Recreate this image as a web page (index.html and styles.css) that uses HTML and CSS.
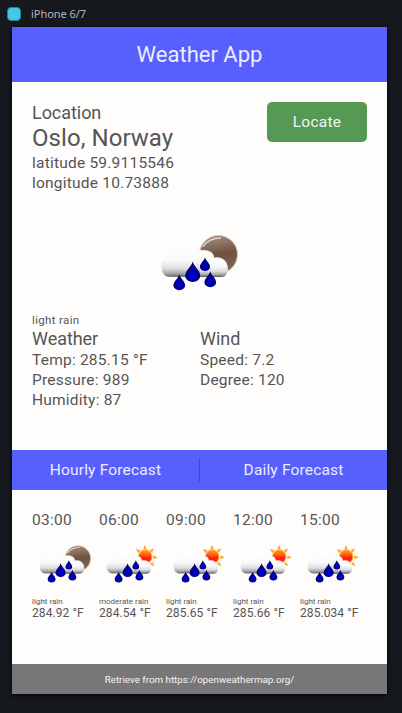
FILE: index.html
```html
<!DOCTYPE html>
<html lang="en">
<head>
<meta charset="utf-8">
<title>Weather App</title>
<link rel="stylesheet" href="styles.css">
</head>
<body>
<svg class="defs" aria-hidden="true">
  <defs>
    <linearGradient id="cloudFill" x1="0" y1="0" x2="0" y2="1">
      <stop offset="0" stop-color="#fff"/><stop offset=".52" stop-color="#fafafa"/>
      <stop offset=".76" stop-color="#dedede"/><stop offset=".91" stop-color="#a0a0a0"/><stop offset="1" stop-color="#555"/>
    </linearGradient>
    <linearGradient id="moonFill" x1="0" y1="0" x2=".15" y2="1">
      <stop offset="0" stop-color="#a48e80"/><stop offset=".3" stop-color="#8b705e"/><stop offset=".55" stop-color="#6d5240"/><stop offset="1" stop-color="#806654"/>
    </linearGradient>
    <linearGradient id="sunFill" x1="0" y1="0" x2="0" y2="1">
      <stop offset="0" stop-color="#ff9a20"/><stop offset=".35" stop-color="#ff6010"/><stop offset=".6" stop-color="#ff1a08"/><stop offset="1" stop-color="#ff3a18"/>
    </linearGradient>
    <radialGradient id="dropFill" cx=".5" cy=".65" r=".55">
      <stop offset="0" stop-color="#0000d8"/><stop offset=".45" stop-color="#0000ac"/><stop offset="1" stop-color="#000058"/>
    </radialGradient>
    <filter id="soft" x="-10%" y="-10%" width="120%" height="120%"><feGaussianBlur stdDeviation=".6"/></filter>
    <path id="drop" d="M0-10C1-5 7.500-1 7.500 4.500A7.500 6 0 0 1-7.500 4.500C-7.500-1-1-5 0-10Z" fill="url(#dropFill)"/>
    <g id="rain">
      <path d="M39 65C36 65 34 62 36 55C39 42 54 34 62 41Q64 43 64 46C70 44 77 48 77.500 55Q78 65 72 65Z" fill="url(#cloudFill)" stroke="#eee" stroke-width=".5"/>
      <path d="M20 65C14 65 11.500 60 11.500 55C11.500 49 15 45 20 44C20 36 25 30.500 33 30.500C41 29 46 32 48 39C56 36 64 42 63 50Q64 65 57 65Z" fill="url(#cloudFill)" stroke="#eee" stroke-width=".4"/>
      <path d="M56 41C61 43 64 47 63 52C68 46 77 50 77.500 57Q77 65 70 65H50V42Z" fill="url(#cloudFill)"/>
      <use href="#drop" transform="translate(42.700 59.600)"/>
      <use href="#drop" transform="translate(55 52) scale(.67)"/>
      <use href="#drop" transform="translate(29.300 70) scale(.78)"/>
      <use href="#drop" transform="translate(60.300 67) scale(.78)"/>
    </g>
    <symbol id="rain-night" viewBox="0 0 100 100">
      <g filter="url(#soft)">
        <circle cx="68.500" cy="42.500" r="19" fill="url(#moonFill)" stroke="#dac9bf" stroke-width="1"/>
        <path d="M53 35C57 28 64 26 71 26" fill="none" stroke="#e1d6d0" stroke-width="1.500"/>
        <use href="#rain"/>
      </g>
    </symbol>
    <symbol id="rain-day" viewBox="0 0 100 100">
      <g filter="url(#soft)">
        <g fill="#ffa62b">
          <path d="M66 29 68.500 22 71.500 29Z"/><path d="M66 29 68.500 22 71.500 29Z" transform="rotate(45 69 41)"/>
          <path d="M66 29 68.500 22 71.500 29Z" transform="rotate(90 69 41)"/><path d="M66 29 68.500 22 71.500 29Z" transform="rotate(135 69 41)"/>
          <path d="M66 29 68.500 22 71.500 29Z" transform="rotate(-45 69 41)"/>
        </g>
        <circle cx="69" cy="40" r="10" fill="url(#sunFill)" stroke="#ffa030" stroke-width="1.500"/>
        <use href="#rain"/>
      </g>
    </symbol>
  </defs>
</svg>
<div class="device"><span class="device-dot"></span><span>iPhone 6/7</span></div>
<main class="app">
  <header class="title">Weather App</header>
  <section class="content">
    <div class="location">
      <div>
        <div class="heading">Location</div>
        <div class="city">Oslo, Norway</div>
        <div class="line">latitude 59.9115546</div>
        <div class="line">longitude 10.73888</div>
      </div>
      <button class="locate">Locate</button>
    </div>
    <svg class="current-icon"><use href="#rain-night"/></svg>
    <div class="condition">light rain</div>
    <div class="details">
      <div>
        <div class="heading">Weather</div>
        <div class="line">Temp: 285.15 °F</div>
        <div class="line">Pressure: 989</div>
        <div class="line">Humidity: 87</div>
      </div>
      <div>
        <div class="heading">Wind</div>
        <div class="line">Speed: 7.2</div>
        <div class="line">Degree: 120</div>
      </div>
    </div>
  </section>
  <nav class="tabs"><span class="tab">Hourly Forecast</span><span class="tab">Daily Forecast</span></nav>
  <section class="hours">
    <div class="hour"><div class="time">03:00</div><svg class="hour-icon"><use href="#rain-night"/></svg><div class="desc">light rain</div><div class="temp">284.92 °F</div></div>
    <div class="hour"><div class="time">06:00</div><svg class="hour-icon"><use href="#rain-day"/></svg><div class="desc">moderate rain</div><div class="temp">284.54 °F</div></div>
    <div class="hour"><div class="time">09:00</div><svg class="hour-icon"><use href="#rain-day"/></svg><div class="desc">light rain</div><div class="temp">285.65 °F</div></div>
    <div class="hour"><div class="time">12:00</div><svg class="hour-icon"><use href="#rain-day"/></svg><div class="desc">light rain</div><div class="temp">285.66 °F</div></div>
    <div class="hour"><div class="time">15:00</div><svg class="hour-icon"><use href="#rain-day"/></svg><div class="desc">light rain</div><div class="temp">285.034 °F</div></div>
  </section>
  <footer class="footer">Retrieve from https://openweathermap.org/</footer>
</main>
</body>
</html>
```
FILE: styles.css
```css
* { box-sizing: border-box; }
body { margin: 0; height: 713px; overflow: hidden; background: #15191e; font-family: Roboto, sans-serif; color: #555; }
.defs { position: absolute; width: 0; height: 0; }
.device { height: 27px; padding-left: 7px; display: flex; align-items: center; gap: 10px; color: #b4b5b7; font: 11px/26px "Noto Sans", sans-serif; letter-spacing: -.05px; }
.device-dot { width: 14px; height: 14px; border-radius: 4px; background: #45c8e7; border: 1px solid #287e92; }
.app { width: 375px; height: 667px; margin-left: 12px; display: flex; flex-direction: column; background: #fffdfc; box-shadow: 0 1px 4px #000; }
.title { height: 55px; background: #575fff; color: #ececff; font-size: 22px; line-height: 55px; text-align: center; }
.content { height: 368px; padding: 20px 20px 0; }
.location { height: 110px; display: flex; justify-content: space-between; align-items: flex-start; }
.heading { font-size: 18px; line-height: 22px; letter-spacing: -.05px; }
.city { font-size: 24px; line-height: 29px; letter-spacing: .06px; }
.line { font-size: 15.5px; line-height: 20px; letter-spacing: .22px; }
.locate { width: 100px; height: 40px; padding: 0; border: 0; border-radius: 5px; background: #559955; color: #f0f4f0; font: 15.5px Roboto, sans-serif; letter-spacing: .25px; }
.current-icon { display: block; width: 100px; height: 100px; margin: 0 auto; }
.condition { font-size: 11.5px; line-height: 16px; letter-spacing: .35px; }
.details { display: grid; grid-template-columns: 168px 1fr; }
.tabs { height: 40px; display: flex; align-items: center; background: #575fff; color: #ececff; }
.tab { flex: 1; font-size: 15.5px; line-height: 24px; letter-spacing: .17px; text-align: center; }
.tab + .tab { border-left: 1px solid #4045c4; }
.hours { flex: 1; display: grid; grid-template-columns: repeat(5, 67px); padding: 20px 20px 0; }
.time { font-size: 15.5px; line-height: 20px; letter-spacing: .25px; }
.hour-icon { display: block; width: 67px; height: 67px; }
.desc { font-size: 8px; line-height: 9px; }
.temp { font-size: 12px; line-height: 15px; letter-spacing: .08px; }
.footer { height: 30px; padding-top: 1px; background: #777; color: #f4f4f4; font-size: 9.8px; line-height: 30px; text-align: center; }
```
